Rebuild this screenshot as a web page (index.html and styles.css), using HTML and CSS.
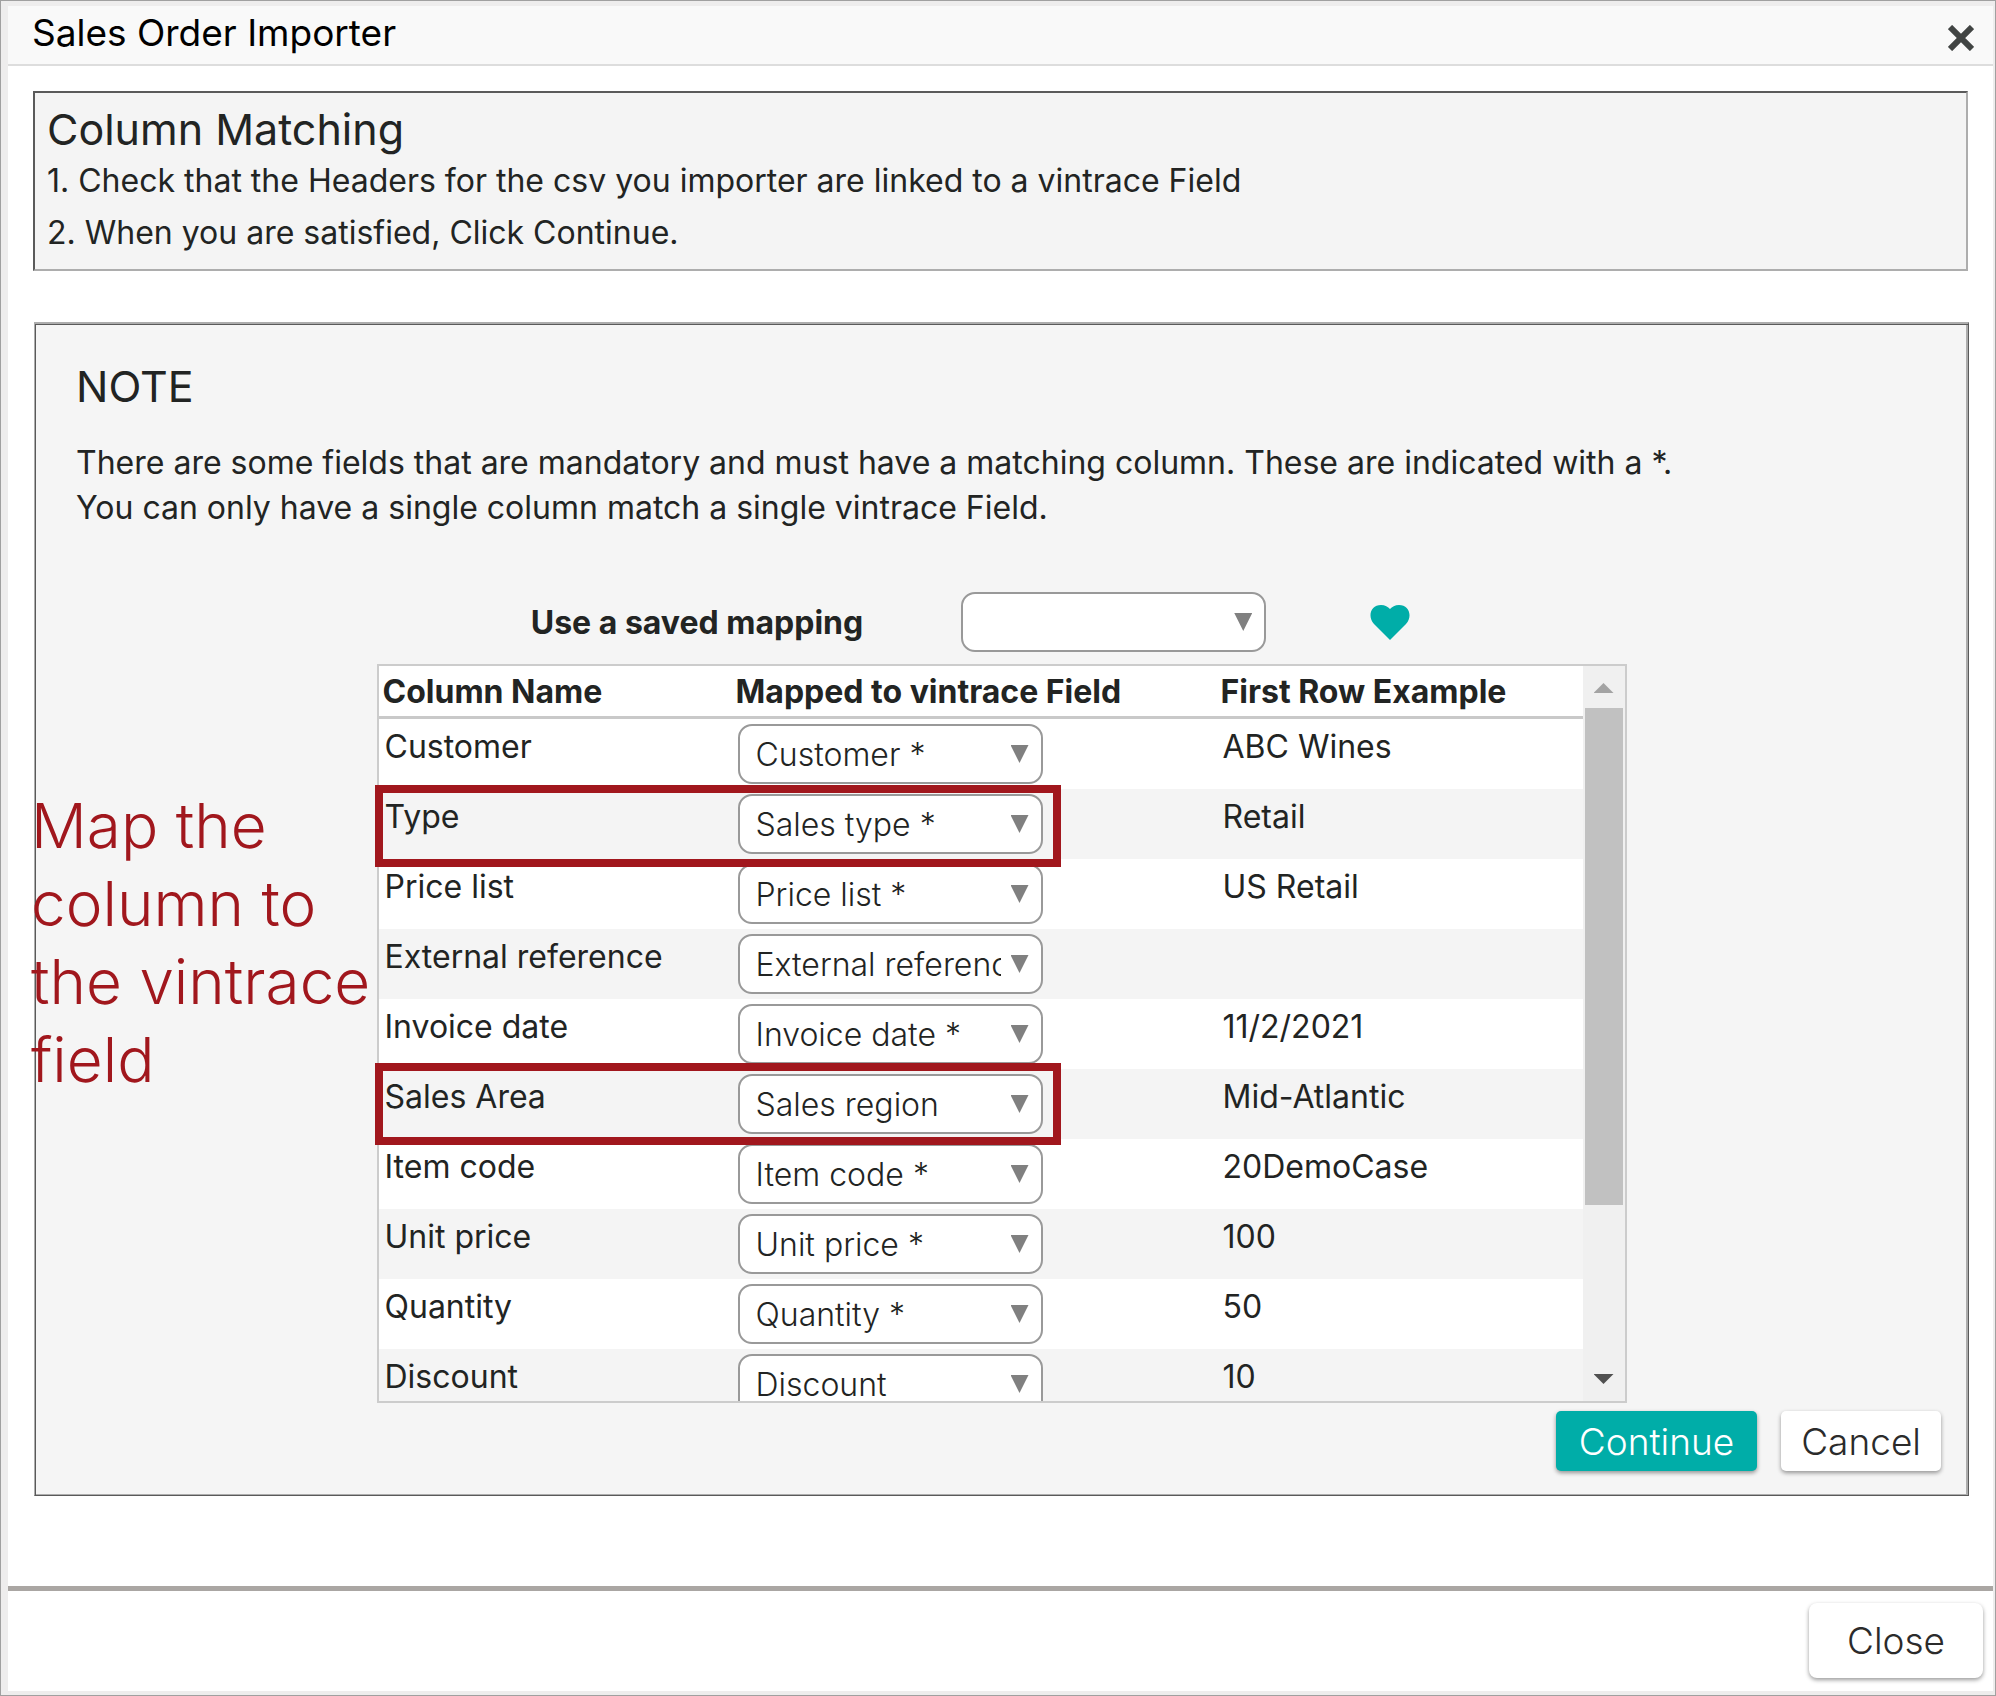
FILE: index.html
```html
<!DOCTYPE html>
<html lang="en">
<head>
    <meta charset="UTF-8">
    <meta name="viewport" content="width=device-width, initial-scale=1.0">
    <title>Sales Order Importer</title>
    <link rel="stylesheet" href="styles.css">
</head>
<body>
    <div class="window">
        <header class="title-bar">
            <h1>Sales Order Importer</h1>
            <button type="button" class="close-icon" aria-label="Close window">
                <svg viewBox="0 0 26 26" width="26" height="26">
                    <path d="M2 2 L24 24 M24 2 L2 24" stroke="#414443" stroke-width="6" fill="none"/>
                </svg>
            </button>
        </header>

        <main class="content">
            <section class="intro">
                <h2>Column Matching</h2>
                <p>1. Check that the Headers for the csv you importer are linked to a vintrace Field</p>
                <p>2. When you are satisfied, Click Continue.</p>
            </section>

            <section class="panel">
                <h2>NOTE</h2>
                <p class="note">There are some fields that are mandatory and must have a matching column. These are indicated with a *.<br>
                You can only have a single column match a single vintrace Field.</p>

                <div class="saved-mapping">
                    <label for="savedMapping">Use a saved mapping</label>
                    <span class="select"><select id="savedMapping"><option></option></select></span>
                    <button type="button" class="favourite" aria-label="Save mapping">
                        <svg viewBox="0 0 40 36" width="40" height="36">
                            <path d="M20 36 L4 20 C-3 12 1 1 11 1 C15 1 18 3 20 5 C22 3 25 1 29 1 C39 1 43 12 36 20 Z" fill="#00ada8"/>
                        </svg>
                    </button>
                </div>

                <div class="mapping">
                    <div class="mapping-view">
                        <table>
                            <thead>
                                <tr>
                                    <th class="col-name">Column Name</th>
                                    <th class="col-field">Mapped to vintrace Field</th>
                                    <th>First Row Example</th>
                                </tr>
                            </thead>
                            <tbody>
                                <tr>
                                    <td><label for="f1">Customer</label></td>
                                    <td><span class="select"><select id="f1"><option>Customer *</option></select></span></td>
                                    <td>ABC Wines</td>
                                </tr>
                                <tr>
                                    <td><label for="f2">Type</label></td>
                                    <td><span class="select"><select id="f2"><option>Sales type *</option></select></span></td>
                                    <td>Retail</td>
                                </tr>
                                <tr>
                                    <td><label for="f3">Price list</label></td>
                                    <td><span class="select"><select id="f3"><option>Price list *</option></select></span></td>
                                    <td>US Retail</td>
                                </tr>
                                <tr>
                                    <td><label for="f4">External reference</label></td>
                                    <td><span class="select"><select id="f4"><option>External reference</option></select></span></td>
                                    <td></td>
                                </tr>
                                <tr>
                                    <td><label for="f5">Invoice date</label></td>
                                    <td><span class="select"><select id="f5"><option>Invoice date *</option></select></span></td>
                                    <td>11/2/2021</td>
                                </tr>
                                <tr>
                                    <td><label for="f6">Sales Area</label></td>
                                    <td><span class="select"><select id="f6"><option>Sales region</option></select></span></td>
                                    <td>Mid-Atlantic</td>
                                </tr>
                                <tr>
                                    <td><label for="f7">Item code</label></td>
                                    <td><span class="select"><select id="f7"><option>Item code *</option></select></span></td>
                                    <td>20DemoCase</td>
                                </tr>
                                <tr>
                                    <td><label for="f8">Unit price</label></td>
                                    <td><span class="select"><select id="f8"><option>Unit price *</option></select></span></td>
                                    <td>100</td>
                                </tr>
                                <tr>
                                    <td><label for="f9">Quantity</label></td>
                                    <td><span class="select"><select id="f9"><option>Quantity *</option></select></span></td>
                                    <td>50</td>
                                </tr>
                                <tr>
                                    <td><label for="f10">Discount</label></td>
                                    <td><span class="select"><select id="f10"><option>Discount</option></select></span></td>
                                    <td>10</td>
                                </tr>
                            </tbody>
                        </table>
                    </div>
                    <div class="scrollbar" aria-hidden="true">
                        <span class="arrow-up"></span>
                        <span class="thumb"></span>
                        <span class="arrow-down"></span>
                    </div>
                    <div class="highlight highlight-type"></div>
                    <div class="highlight highlight-area"></div>
                </div>

                <div class="actions">
                    <button type="button" class="btn btn-primary">Continue</button>
                    <button type="button" class="btn">Cancel</button>
                </div>

                <p class="callout">Map the<br>column to<br>the vintrace<br>field</p>
            </section>
        </main>

        <footer class="footer">
            <button type="button" class="btn btn-close">Close</button>
        </footer>
    </div>
</body>
</html>
```

FILE: styles.css
```css
* {
    box-sizing: border-box;
}
body {
    margin: 0;
    font-family: Inter, 'Open Sans', sans-serif;
    font-size: 32px;
    line-height: 45px;
    color: #222423;
}
h1, h2, p {
    margin: 0;
    font-weight: 400;
}
button, select {
    font-family: inherit;
    color: inherit;
}
.window {
    display: flex;
    flex-direction: column;
    min-height: 100vh;
    background: #fff;
    border: 1px solid #a0a0a0;
    box-shadow: inset 7px 5px #eeeded, inset -2px -4px #eeeded;
    padding: 5px 2px 4px 7px;
}

/* title bar */
.title-bar {
    display: flex;
    justify-content: space-between;
    align-items: center;
    height: 60px;
    padding: 0 19px 0 24px;
    background: #f9f9f9;
    border-bottom: 2px solid #ddd;
}
.title-bar h1 {
    font-size: 37px;
    line-height: 50px;
    color: #000;
    padding-bottom: 4px;
}
.close-icon, .favourite {
    display: flex;
    padding: 0;
    border: 0;
    background: none;
    cursor: pointer;
}
.close-icon {
    padding-top: 6px;
}
.favourite {
    margin-left: 6px;
}

.content {
    flex: 1;
    padding: 25px 24px 80px 25px;
}
.intro {
    min-height: 180px;
    margin-right: 1px;
    padding: 10px 12px 9px;
    background: #f4f4f4;
    border: 2px solid;
    border-color: #5a5a5a #adadad #adadad #5a5a5a;
}
.intro h2, .panel h2 {
    font-size: 43px;
    line-height: 52px;
}
.intro p {
    line-height: 52px;
}

.panel {
    position: relative;
    margin: 51px 0 0 1px;
    padding: 36px 27px 24px;
    background: #f5f5f5;
    border: 1px solid;
    border-color: #adadad #5a5a5a #5a5a5a #adadad;
    border-top-width: 2px;
    box-shadow: inset 1px 1px #5a5a5a, inset -2px -1px #adadad;
}
.panel h2, .note {
    padding-left: 14px;
}
.note {
    margin-top: 28px;
}
.saved-mapping {
    display: flex;
    align-items: center;
    justify-content: center;
    gap: 98px;
    margin-top: 62px;
    padding-right: 62px;
}
.saved-mapping label {
    font-weight: 700;
}

/* drop-downs */
.select {
    position: relative;
    display: block;
    width: 305px;
    max-width: 100%;
}
.select select {
    display: block;
    width: 100%;
    height: 60px;
    padding: 0 40px 0 16px;
    appearance: none;
    background: #fff;
    border: 2px solid #999;
    border-radius: 14px;
    font-size: 32px;
    font-weight: 300;
}
.select::after {
    content: "";
    position: absolute;
    top: 21px;
    right: 14px;
    width: 18px;
    height: 18px;
    background: #808080;
    clip-path: polygon(0 0, 100% 0, 50% 100%);
    pointer-events: none;
}

/* mapping table */
.mapping {
    position: relative;
    display: flex;
    width: 1250px;
    max-width: 100%;
    height: 739px;
    margin: 12px auto 0;
    border: 2px solid #ccc;
}
.mapping-view {
    flex: 1;
    overflow: hidden;
    background: #fff;
}
table {
    width: 100%;
    border-collapse: separate;
    border-spacing: 0;
    table-layout: fixed;
}
th {
    height: 53px;
    padding: 0 4px;
    border-bottom: 3px solid #c9c9c9;
    text-align: left;
    font-weight: 700;
}
.col-name {
    width: 353px;
}
.col-field {
    width: 485px;
}
td {
    height: 70px;
    padding: 5px 6px;
    vertical-align: top;
}
tbody tr:nth-child(even) {
    background: #f4f4f4;
}
.scrollbar {
    display: flex;
    flex-direction: column;
    align-items: center;
    width: 42px;
    padding: 17px 2px;
    background: #f0f0f0;
}
.arrow-up, .arrow-down {
    width: 20px;
    height: 10px;
    background: #a3a3a3;
    clip-path: polygon(50% 0, 100% 100%, 0 100%);
}
.arrow-down {
    margin-top: auto;
    background: #505050;
    clip-path: polygon(0 0, 100% 0, 50% 100%);
}
.thumb {
    width: 38px;
    height: 497px;
    margin-top: 15px;
    background: #c1c1c1;
}

/* red mark-up over the table */
.highlight {
    position: absolute;
    left: -4px;
    width: 686px;
    height: 82px;
    border: 8px solid #a1171d;
    pointer-events: none;
}
.highlight-type {
    top: 119px;
}
.highlight-area {
    top: 397px;
}
.callout {
    position: absolute;
    left: -4px;
    top: 463px;
    font-size: 62px;
    line-height: 78px;
    font-weight: 300;
    color: #a1171d;
}

/* buttons */
.actions {
    display: flex;
    justify-content: flex-end;
    gap: 24px;
    margin-top: 8px;
}
.btn {
    height: 60px;
    padding: 0 20px;
    border: 0;
    border-radius: 5px;
    background: #fff;
    box-shadow: 0 2px 4px rgba(0, 0, 0, 0.4);
    font-size: 37px;
    font-weight: 300;
    color: #2b2b2b;
    cursor: pointer;
}
.btn-primary {
    padding: 0 23px;
    background: #00ada8;
    color: #fff;
}
.footer {
    display: flex;
    justify-content: flex-end;
    padding: 12px 10px 13px;
    border-top: 5px solid #aaa6a3;
}
.btn-close {
    height: 75px;
    padding: 0 38px;
    border-radius: 8px;
}
```
